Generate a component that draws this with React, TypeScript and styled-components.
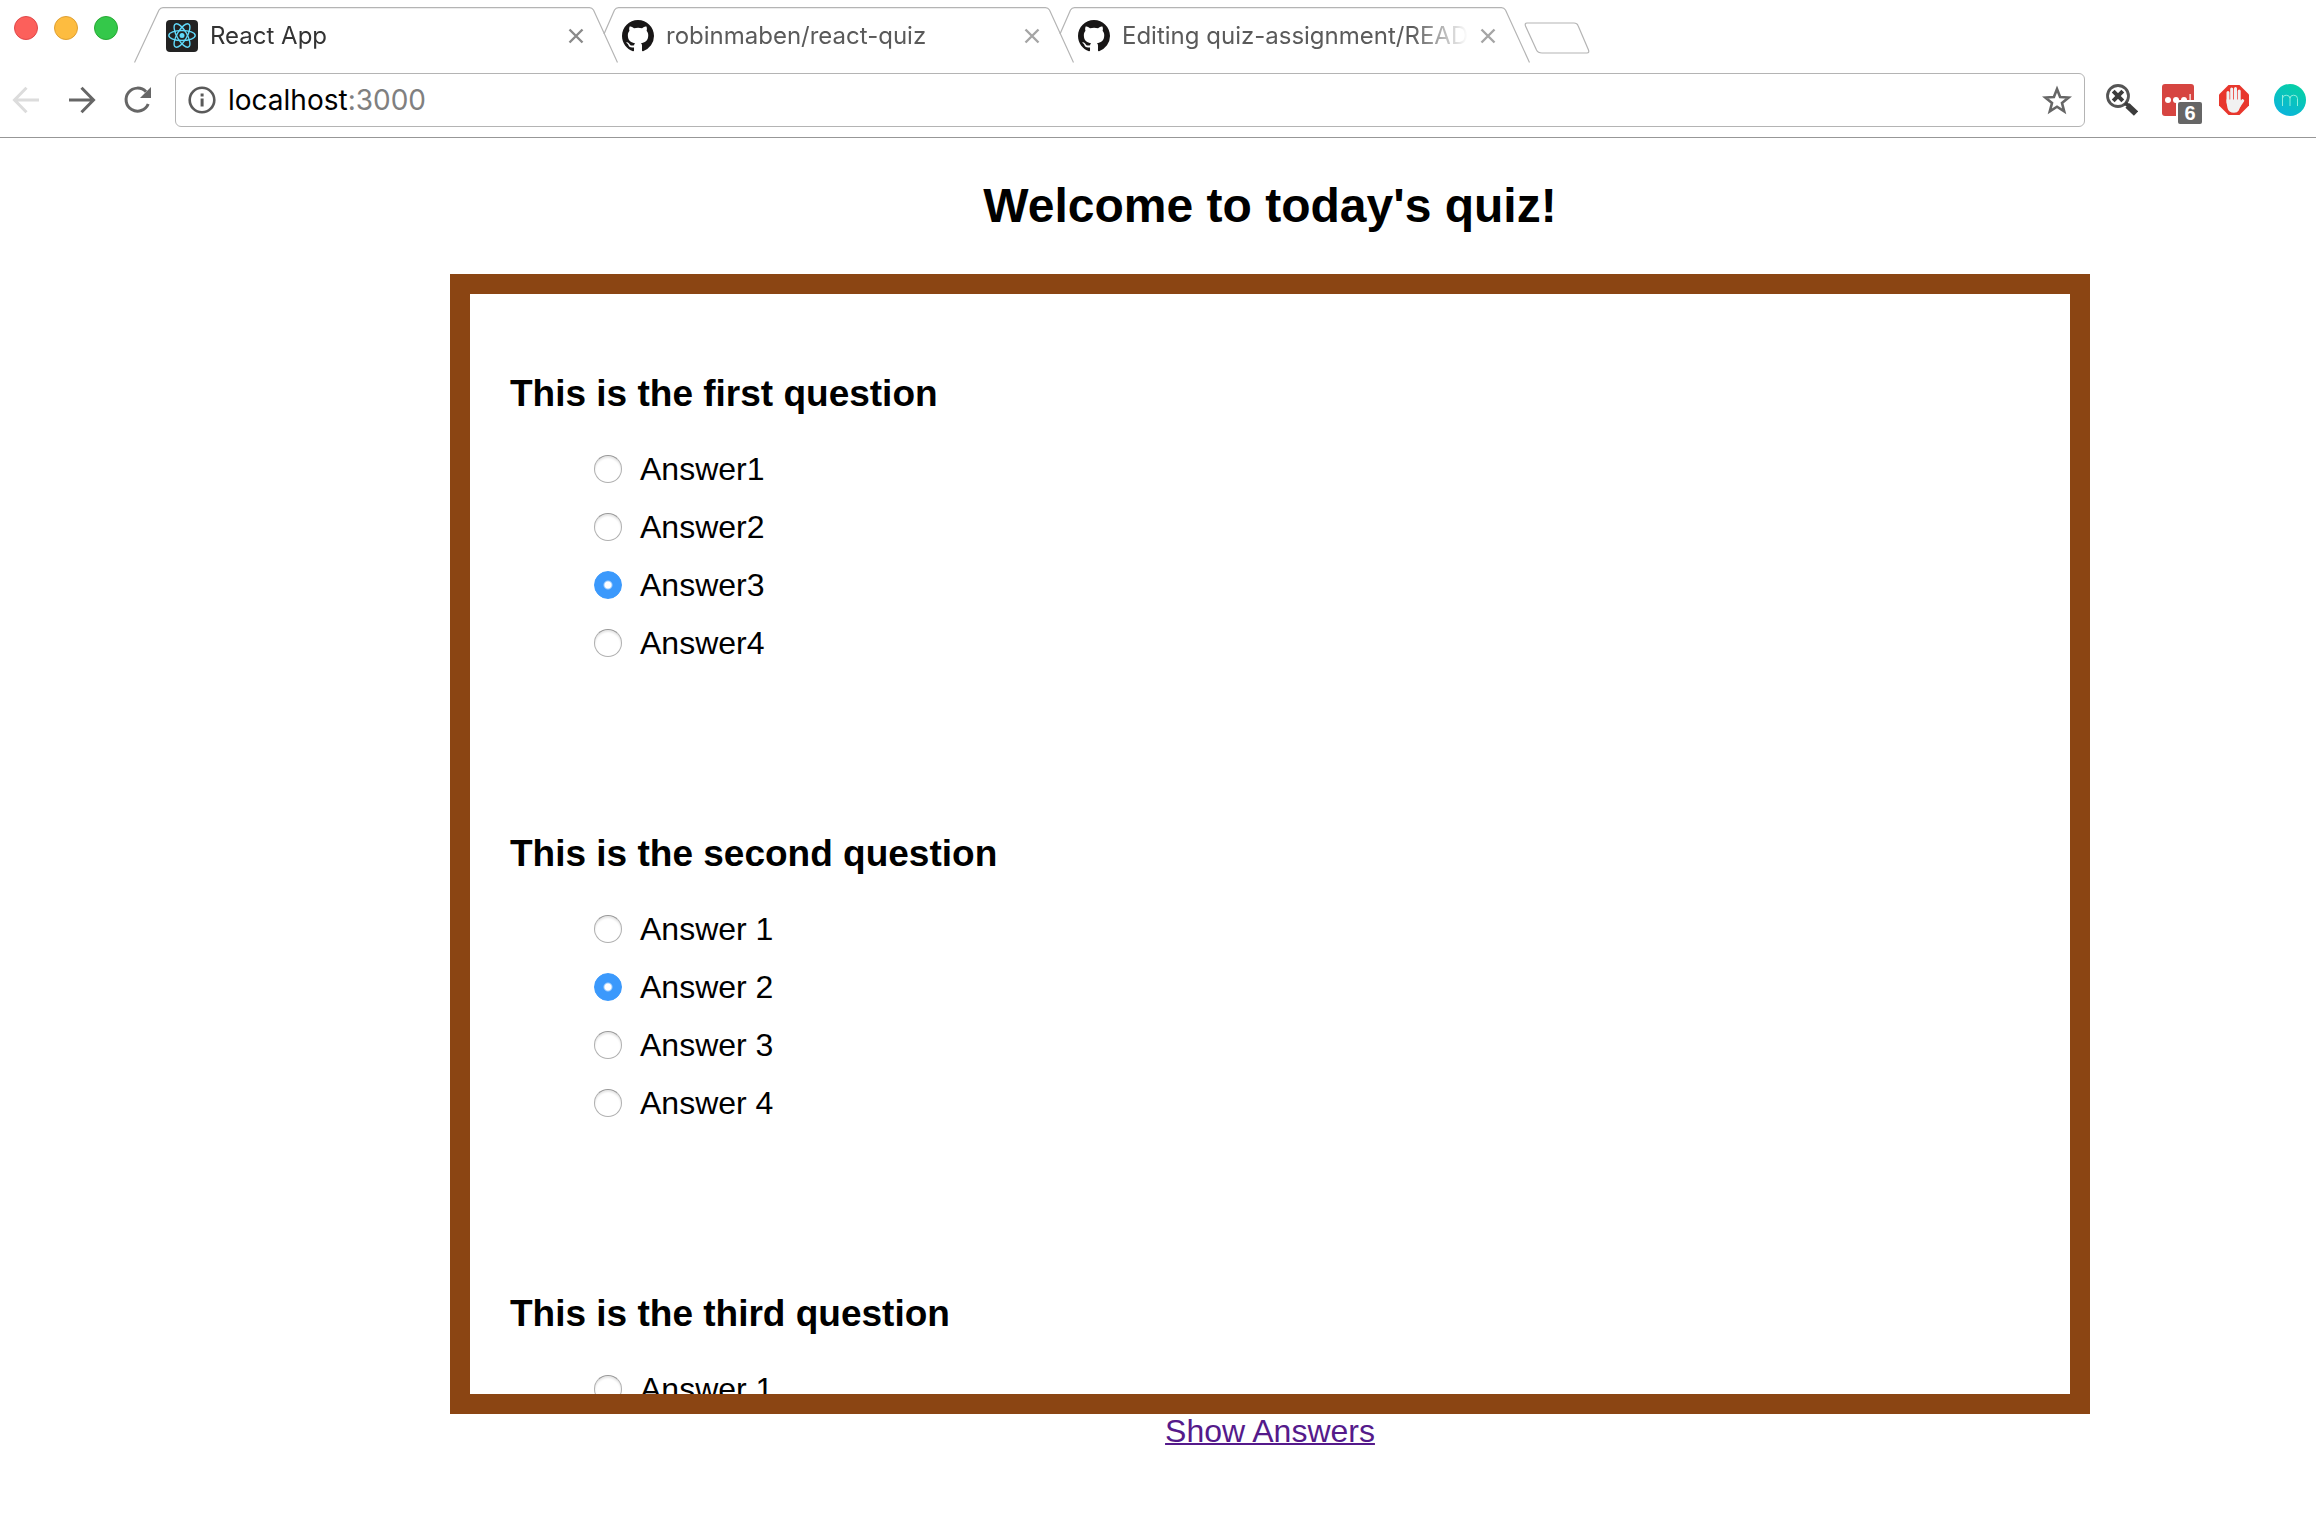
import React, { useId, useState } from "react";
import styled, { createGlobalStyle } from "styled-components";

const GlobalStyle = createGlobalStyle`
  *, *::before, *::after { box-sizing: border-box; }
  body {
    margin: 0;
    background: #fff;
    color: #000;
    font-family: "Liberation Sans", Helvetica, Arial, sans-serif;
  }
  button { padding: 0; border: 0; background: none; }
  svg { display: block; }
`;

const Chrome = styled.header`
  display: flex;
  flex-direction: column;
  border-bottom: 1px solid #979797;
  font-family: Inter, Roboto, sans-serif;
`;

const TabStrip = styled.div`
  display: flex;
  align-items: flex-start;
  height: 63px;
  padding: 7px 14px 0;
`;

const WindowControls = styled.div`
  display: flex;
  gap: 16px;
  margin-top: 9px;
  margin-right: 16px;
`;

const Light = styled.button<{ $fill: string; $edge: string }>`
  width: 24px;
  height: 24px;
  border: 1px solid ${(p) => p.$edge};
  border-radius: 50%;
  background: ${(p) => p.$fill};
`;

const Tabs = styled.nav`
  display: flex;
`;

const Tab = styled.div<{ $active?: boolean }>`
  position: relative;
  z-index: ${(p) => (p.$active ? 1 : 0)};
  display: flex;
  align-items: center;
  gap: 12px;
  width: 484px;
  height: 56px;
  margin-right: -28px;
  padding: 2px 34px 0 32px;
  color: ${(p) => (p.$active ? "#333" : "#5a5a5a")};
`;

const TabShape = styled.svg`
  position: absolute;
  inset: 0;
  z-index: -1;
`;

const TabTitle = styled.span`
  flex: 1;
  overflow: hidden;
  font-size: 24px;
  line-height: 32px;
  white-space: nowrap;
  mask-image: linear-gradient(to right, #000 calc(100% - 56px), transparent);
`;

const CloseButton = styled.button<{ $active?: boolean }>`
  width: 16px;
  height: 16px;
  color: ${(p) => (p.$active ? "#8a8a8a" : "#a5a5a5")};
`;

const NewTab = styled.button`
  margin-top: 15px;
  margin-left: 22px;
`;

const Toolbar = styled.div`
  display: flex;
  align-items: center;
  gap: 21px;
  padding: 10px;
`;

const NavButtons = styled.div`
  display: flex;
  gap: 24px;
`;

const NavButton = styled.button<{ $muted?: boolean }>`
  color: ${(p) => (p.$muted ? "#dcdcdc" : "#666")};
`;

const AddressBar = styled.div`
  display: flex;
  flex: 1;
  align-items: center;
  gap: 12px;
  height: 54px;
  padding: 0 12px;
  border: 1px solid #b4b4b4;
  border-radius: 6px;
`;

const Address = styled.span`
  flex: 1;
  font-size: 28px;
  line-height: 36px;
`;

const Port = styled.span`
  color: #808080;
`;

const Extensions = styled.div`
  display: flex;
  gap: 24px;
`;

const Extension = styled.button`
  position: relative;
  width: 32px;
  height: 32px;
`;

const Badge = styled.span`
  position: absolute;
  top: 18px;
  left: 16px;
  width: 24px;
  border-radius: 2px;
  background: #666;
  box-shadow: 0 0 0 2px #fff;
  color: #fff;
  font: bold 20px/22px "Liberation Sans", Arial, sans-serif;
  text-align: center;
`;

const Page = styled.main`
  display: flex;
  flex-direction: column;
  align-items: stretch;
  padding: 40px 226px 0 450px;
`;

const Title = styled.h1`
  margin: 0 0 40px;
  font-size: 48px;
  line-height: 56px;
  text-align: center;
`;

const QuizFrame = styled.section`
  height: 1140px;
  padding: 40px;
  overflow: hidden;
  border: 20px solid #8b4513;
`;

const Question = styled.fieldset`
  height: 460px;
  margin: 0;
  padding: 0;
  border: 0;
`;

const Prompt = styled.legend`
  padding: 38px 0 0;
  font-size: 37px;
  font-weight: bold;
  line-height: 44px;
`;

const Answers = styled.ul`
  margin: 0;
  padding: 24px 0 0 84px;
  list-style: none;
`;

const Answer = styled.li`
  display: flex;
  align-items: center;
  gap: 18px;
  height: 58px;
  font-size: 32px;
  line-height: 36px;
`;

const Radio = styled.input`
  appearance: none;
  width: 28px;
  height: 28px;
  margin: 0;
  border: 1px solid #b0b0b0;
  border-top-color: #989898;
  border-radius: 50%;
  background: #fff;
  box-shadow: inset 0 2px 2px #e6e6e6;

  &:checked {
    border-color: #3b99fc;
    background: radial-gradient(circle, #fff 3px, #3b99fc 5px);
    box-shadow: none;
  }
`;

const ShowAnswers = styled.a`
  align-self: center;
  color: #551a8b;
  font-size: 32px;
  line-height: 34px;
  text-decoration-thickness: 2px;
`;

const ReactIcon = () => (
  <svg width="32" height="32" viewBox="0 0 32 32" aria-hidden="true">
    <rect width="32" height="32" rx="4" fill="#222" />
    <g fill="none" stroke="#61dafb" strokeWidth="1.4">
      <ellipse cx="16" cy="15.5" rx="13.2" ry="5" />
      <ellipse cx="16" cy="15.5" rx="13.2" ry="5" transform="rotate(60 16 15.5)" />
      <ellipse cx="16" cy="15.5" rx="13.2" ry="5" transform="rotate(120 16 15.5)" />
    </g>
    <circle cx="16" cy="15.5" r="2.5" fill="#61dafb" />
  </svg>
);

const GithubIcon = () => (
  <svg width="32" height="32" viewBox="0 0 16 16" fill="#181616" aria-hidden="true">
    <path d="M8 0C3.58 0 0 3.58 0 8c0 3.54 2.29 6.53 5.47 7.59.4.07.55-.17.55-.38 0-.19-.01-.82-.01-1.49-2.01.37-2.53-.49-2.69-.94-.09-.23-.48-.94-.82-1.13-.28-.15-.68-.52-.01-.53.63-.01 1.08.58 1.23.82.72 1.21 1.87.87 2.33.66.07-.52.28-.87.51-1.07-1.78-.2-3.64-.89-3.64-3.95 0-.87.31-1.59.82-2.15-.08-.2-.36-1.02.08-2.12 0 0 .67-.21 2.2.82.64-.18 1.32-.27 2-.27s1.36.09 2 .27c1.53-1.04 2.2-.82 2.2-.82.44 1.1.16 1.92.08 2.12.51.56.82 1.27.82 2.15 0 3.07-1.87 3.75-3.65 3.95.29.25.54.73.54 1.48 0 1.07-.01 1.93-.01 2.2 0 .21.15.46.55.38A8.01 8.01 0 0 0 16 8c0-4.42-3.58-8-8-8Z" />
  </svg>
);

const CloseIcon = () => (
  <svg width="16" height="16" viewBox="0 0 16 16" stroke="currentColor" strokeWidth="2.4" aria-hidden="true">
    <path d="M1.5 1.5l13 13M14.5 1.5l-13 13" />
  </svg>
);

const ArrowIcon = ({ left }: { left?: boolean }) => (
  <svg width="32" height="32" viewBox="0 0 32 32" fill="none" stroke="currentColor" strokeWidth="3" aria-hidden="true">
    <path d={left ? "M29 16H5M16.5 3.8L4.5 16l12 12.2" : "M3 16h24M15.5 3.8L27.5 16l-12 12.2"} />
  </svg>
);

const ReloadIcon = () => (
  <svg width="32" height="32" viewBox="0 0 32 32" aria-hidden="true">
    <path d="M26.2 20A11.5 11.5 0 1 1 24 7.8" fill="none" stroke="currentColor" strokeWidth="3" />
    <path d="M29 3v11H18z" fill="currentColor" />
  </svg>
);

const InfoIcon = () => (
  <svg width="28" height="28" viewBox="0 0 28 28" aria-hidden="true">
    <circle cx="14" cy="14" r="12.3" fill="none" stroke="#5a5a5a" strokeWidth="2.6" />
    <path d="M12.6 7.5h3v3h-3zM12.6 12.5h3v8h-3z" fill="#5a5a5a" />
  </svg>
);

const StarIcon = () => (
  <svg width="30" height="30" viewBox="0 0 30 30" fill="none" stroke="#666" strokeWidth="2.6" aria-hidden="true">
    <path d="M15 4l3.1 8 8.6.5-6.7 5.5 2.2 8.3L15 21.7l-7.2 4.6L10 18l-6.7-5.5 8.6-.5z" />
  </svg>
);

const SearchCrossIcon = () => (
  <svg width="32" height="32" viewBox="0 0 32 32" fill="none" stroke="#3c3c3c" aria-hidden="true">
    <circle cx="12" cy="12" r="10.5" stroke="#555" strokeWidth="2.8" />
    <path d="M7.2 7.2l9.600 9.600M16.800 7.200l-9.600 9.600" strokeWidth="4" />
    <path d="M19 19l4 3" strokeWidth="4" />
    <path d="M21.500 21.500l8.500 8" strokeWidth="6" />
  </svg>
);

const PasswordIcon = () => (
  <svg width="32" height="32" viewBox="0 0 32 32" fill="#fff" aria-hidden="true">
    <rect width="32" height="32" rx="3" fill="#d64541" />
    <circle cx="6" cy="16" r="3" />
    <circle cx="14" cy="16" r="3" />
    <circle cx="22" cy="16" r="3" />
    <path d="M27.5 10h1.2v12h-1.2z" />
  </svg>
);

const StopHandIcon = () => (
  <svg width="32" height="32" viewBox="0 0 32 32" aria-hidden="true">
    <path d="M10.5 1h11L31 10.500v11L21.500 31h-11L1 21.500v-11z" fill="#e8372d" />
    <g fill="none" stroke="#f1f1f1" strokeWidth="3" strokeLinecap="round">
      <path d="M10 8.500v10M13.700 5v12M17.500 4.500V17M21.200 7v12M21.500 21.500l3.200-4.800" />
    </g>
    <path d="M8.500 15.500h14.200v6.500l-2 4.500q-1.200 2.300-4.700 2.300-5.500 0-6.500-4.800-1-4-1-8.500z" fill="#f1f1f1" />
  </svg>
);

const MomentumIcon = () => (
  <svg width="32" height="32" viewBox="0 0 32 32" aria-hidden="true">
    <defs>
      <linearGradient id="teal" x1="0.8" y1="0.1" x2="0.3" y2="1">
        <stop offset="0" stopColor="#06cfa6" />
        <stop offset="1" stopColor="#0cb4dc" />
      </linearGradient>
    </defs>
    <circle cx="16" cy="16" r="16" fill="url(#teal)" />
    <path d="M8.5 22V11M8.5 14.5q0-3.3 3.7-3.3t3.8 3.3V22M16 14.5q0-3.3 3.7-3.3t3.8 3.3V22" fill="none" stroke="#8eeedd" strokeWidth="1" />
  </svg>
);

type BrowserTabProps = { title: string; icon: React.ReactNode; active?: boolean; covered?: boolean };

const BrowserTab = ({ title, icon, active, covered }: BrowserTabProps) => (
  <Tab $active={active}>
    <TabShape width="484" height="56" viewBox="0 0 484 56" fill="none" stroke="#b4b4b4" strokeWidth="1.2" aria-hidden="true">
      <path
        d={
          covered
            ? "M14 27L24.5 3Q26 .6 28.5 .6H455.5Q458 .6 459.5 3L483.5 55.5"
            : "M.5 55.5L25 3Q26.5 .6 29 .6H455.5Q458 .6 459.5 3L483.5 55.5"
        }
      />
    </TabShape>
    {icon}
    <TabTitle>{title}</TabTitle>
    <CloseButton $active={active} aria-label={`Close ${title}`}>
      <CloseIcon />
    </CloseButton>
  </Tab>
);

const lights = [
  { name: "Close window", fill: "#fc605b", edge: "#e0484a" },
  { name: "Minimize window", fill: "#fdbc40", edge: "#dfa033" },
  { name: "Zoom window", fill: "#34c84a", edge: "#27a934" },
];

const quiz = [
  { prompt: "This is the first question", answers: ["Answer1", "Answer2", "Answer3", "Answer4"], chosen: 2 },
  { prompt: "This is the second question", answers: ["Answer 1", "Answer 2", "Answer 3", "Answer 4"], chosen: 1 },
  { prompt: "This is the third question", answers: ["Answer 1"], chosen: -1 },
];

const QuizQuestion = ({ prompt, answers, chosen }: (typeof quiz)[number]) => {
  const name = useId();
  const [selected, setSelected] = useState(chosen);
  return (
    <Question>
      <Prompt>{prompt}</Prompt>
      <Answers>
        {answers.map((answer, i) => (
          <Answer key={answer}>
            <Radio
              type="radio"
              id={`${name}-${i}`}
              name={name}
              checked={selected === i}
              onChange={() => setSelected(i)}
            />
            <label htmlFor={`${name}-${i}`}>{answer}</label>
          </Answer>
        ))}
      </Answers>
    </Question>
  );
};

export default function App() {
  return (
    <>
      <GlobalStyle />
      <Chrome>
        <TabStrip>
          <WindowControls>
            {lights.map((l) => (
              <Light key={l.name} $fill={l.fill} $edge={l.edge} aria-label={l.name} />
            ))}
          </WindowControls>
          <Tabs>
            <BrowserTab title="React App" icon={<ReactIcon />} active />
            <BrowserTab title="robinmaben/react-quiz" icon={<GithubIcon />} covered />
            <BrowserTab title="Editing quiz-assignment/README.md" icon={<GithubIcon />} covered />
          </Tabs>
          <NewTab aria-label="New tab">
            <svg width="66" height="32" viewBox="0 0 66 32" fill="none" stroke="#b4b4b4" strokeWidth="1.2" aria-hidden="true">
              <path d="M3 1H50Q53 1 54 3.5L64.5 28Q65.5 31 63 31H18Q14 31 12.5 28L1.5 4Q.5 1 3 1z" />
            </svg>
          </NewTab>
        </TabStrip>
        <Toolbar>
          <NavButtons>
            <NavButton $muted aria-label="Back"><ArrowIcon left /></NavButton>
            <NavButton aria-label="Forward"><ArrowIcon /></NavButton>
            <NavButton aria-label="Reload"><ReloadIcon /></NavButton>
          </NavButtons>
          <AddressBar>
            <InfoIcon />
            <Address>localhost<Port>:3000</Port></Address>
            <StarIcon />
          </AddressBar>
          <Extensions>
            <Extension aria-label="Search tool"><SearchCrossIcon /></Extension>
            <Extension aria-label="Passwords"><PasswordIcon /><Badge>6</Badge></Extension>
            <Extension aria-label="Ad blocker"><StopHandIcon /></Extension>
            <Extension aria-label="Momentum"><MomentumIcon /></Extension>
          </Extensions>
        </Toolbar>
      </Chrome>
      <Page>
        <Title>Welcome to today's quiz!</Title>
        <QuizFrame>
          {quiz.map((q) => (
            <QuizQuestion key={q.prompt} {...q} />
          ))}
        </QuizFrame>
        <ShowAnswers href="#answers">Show Answers</ShowAnswers>
      </Page>
    </>
  );
}
